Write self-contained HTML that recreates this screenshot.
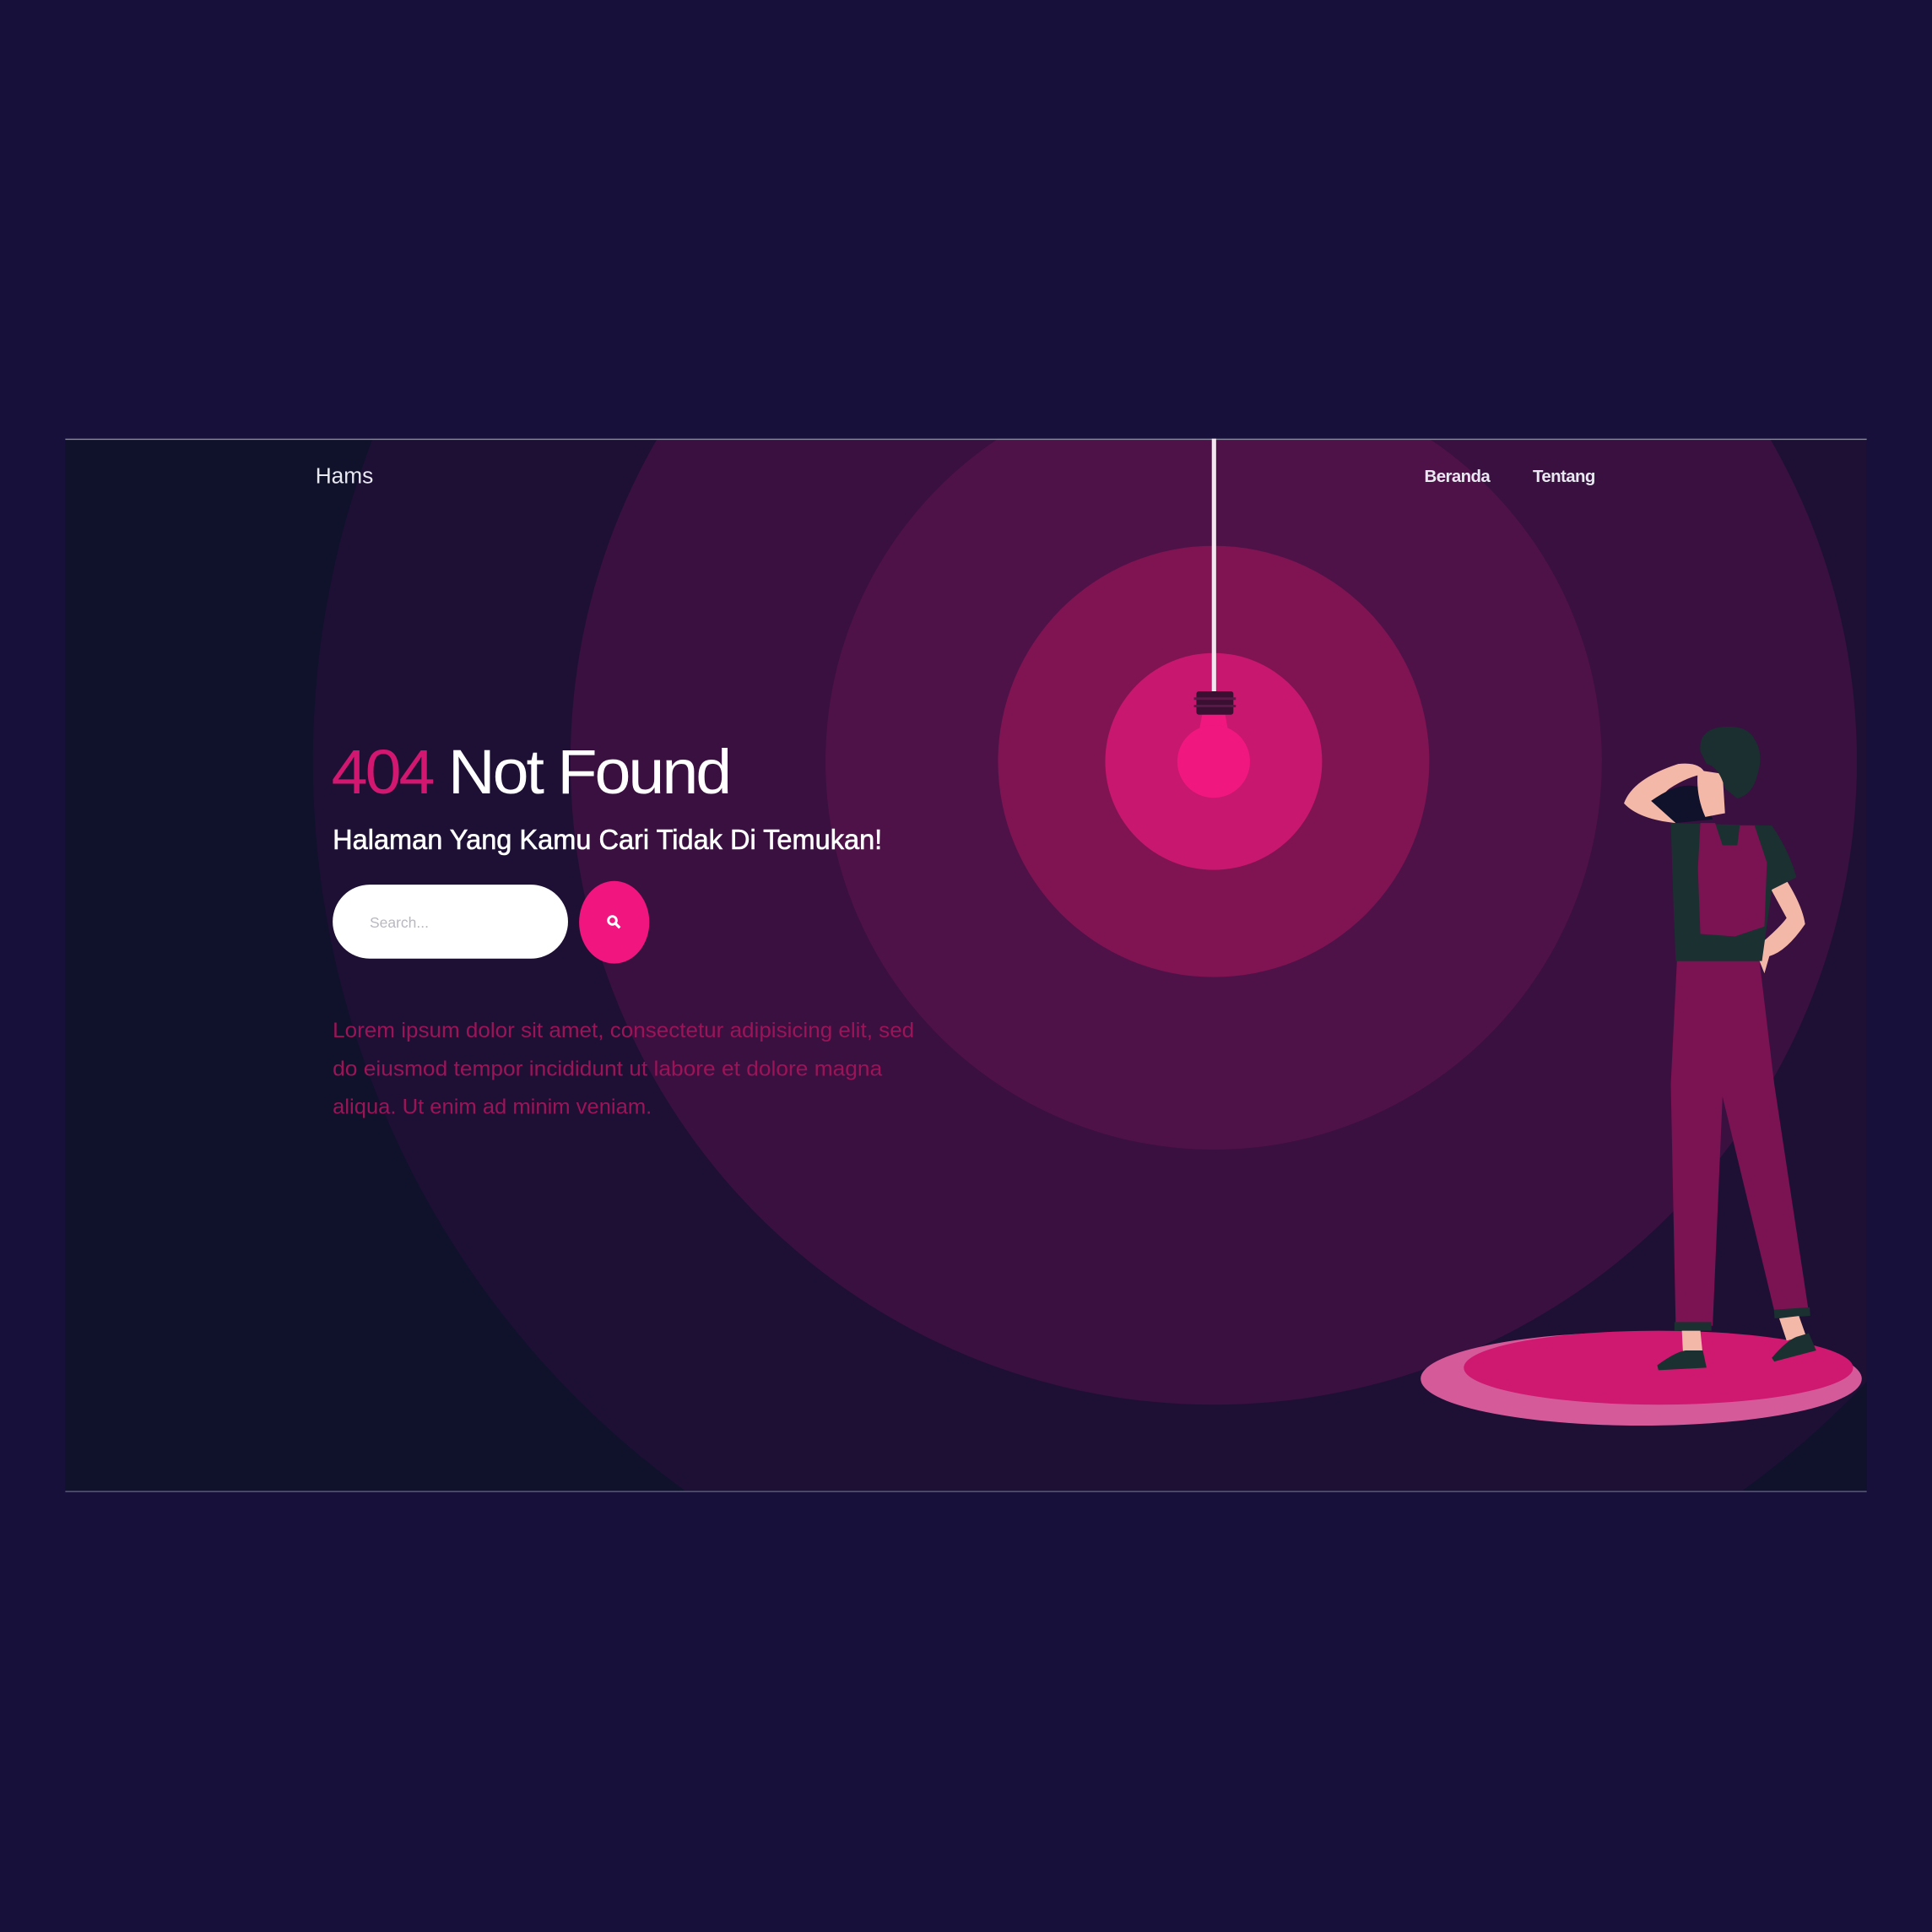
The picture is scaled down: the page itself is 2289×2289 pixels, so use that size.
<!DOCTYPE html>
<html><head><meta charset="utf-8"><style>
html,body{margin:0;padding:0;background:#16103a;}
body{width:2289px;height:2289px;overflow:hidden;}
svg{display:block;}
</style></head><body>
<svg width="2289" height="2289" viewBox="0 0 1568 1568" xmlns="http://www.w3.org/2000/svg">
<defs><clipPath id="fr"><rect x="53" y="356" width="1462" height="854"/></clipPath></defs>
<rect width="1568" height="1568" fill="#16103a"/>
<g clip-path="url(#fr)">
<rect x="53" y="356" width="1462" height="854" fill="#10122b"/>
<circle cx="985" cy="618" r="731" fill="#1e1035"/>
<circle cx="985" cy="618" r="522" fill="#3a1040"/>
<circle cx="985" cy="618" r="315" fill="#4f1248"/>
<circle cx="985" cy="618" r="175" fill="#801452"/>
<circle cx="985" cy="618" r="88" fill="#c8176e"/>
</g>
<line x1="53" y1="356.5" x2="1515" y2="356.5" stroke="#8a8aa0" stroke-width="1"/>
<line x1="53" y1="1210.5" x2="1515" y2="1210.5" stroke="#5a5a78" stroke-width="1"/>
<rect x="983.5" y="356" width="3.5" height="206" fill="#f4e6f0"/>
<path d="M976 578 L994 578 L998 600 L972 600 Z" fill="#f0177f"/>
<circle cx="985" cy="618" r="29.5" fill="#f0177f"/>
<rect x="971" y="561" width="30" height="19" rx="2" fill="#3a0f32"/>
<rect x="969" y="566" width="34" height="2" fill="#5a1a48"/>
<rect x="969" y="572" width="34" height="2" fill="#5a1a48"/>
<ellipse cx="1332" cy="1119" rx="179" ry="38" fill="#d55a9a"/>
<ellipse cx="1346" cy="1110" rx="158" ry="30" fill="#cf1870"/>
<g>
<path d="M1361 780 L1428 780 L1440 880 L1468 1065 L1441 1068 L1398 890 L1390 1076 L1360 1076 L1356 880 Z" fill="#7b1252"/>
<rect x="1359" y="1073" width="30" height="7" fill="#1b3030"/>
<rect x="1440" y="1062" width="29" height="7" fill="#1b3030" transform="rotate(-4 1454 1066)"/>
<path d="M1365 1080 L1380 1080 L1382 1100 L1366 1100 Z" fill="#f4b8a8"/>
<path d="M1444 1070 L1460 1068 L1466 1085 L1450 1088 Z" fill="#f4b8a8"/>
<path d="M1345 1108 Q1360 1097 1368 1096 L1382 1096 L1385 1110 L1346 1112 Z" fill="#1b3030"/>
<path d="M1438 1102 Q1450 1088 1458 1085 L1468 1082 L1474 1096 L1440 1105 Z" fill="#1b3030"/>
<path d="M1440 700 Q1462 730 1465 750 Q1450 772 1436 776 L1432 790 L1428 780 L1430 765 Q1445 752 1450 745 L1432 712 Z" fill="#f4b8a8"/>
<path d="M1356 668 L1438 670 Q1452 690 1458 712 L1438 722 L1430 780 L1360 780 L1358 730 Z" fill="#1b3030"/>
<path d="M1380 668 L1392 668 L1398 686 L1410 686 L1412 670 L1424 670 L1434 700 L1432 752 L1408 760 L1380 758 L1378 705 Z" fill="#7b1252"/>
<path d="M1360 668 Q1330 665 1318 652 Q1325 632 1362 620 Q1380 618 1384 628 Q1370 630 1355 640 Q1344 648 1360 655 Z" fill="#f4b8a8"/>
<path d="M1340 650 Q1365 632 1382 640 L1390 665 L1360 668 Z" fill="#10112a"/>
<path d="M1378 625 L1398 628 L1400 660 L1384 663 Q1376 645 1378 625 Z" fill="#f4b8a8"/>
<path d="M1380 610 Q1378 592 1398 590 Q1418 588 1424 600 Q1432 612 1426 630 Q1422 645 1410 648 L1400 640 Q1395 622 1385 620 Z" fill="#1b2e30"/>
</g>
<text x="256" y="392" font-family="Liberation Sans, sans-serif" font-size="18" fill="#e8e8f0">Hams</text>
<text x="1156" y="391" font-family="Liberation Sans, sans-serif" font-size="14" font-weight="bold" fill="#e8e8f0" letter-spacing="-0.4">Beranda</text>
<text x="1244" y="391" font-family="Liberation Sans, sans-serif" font-size="14" font-weight="bold" fill="#e8e8f0" letter-spacing="-0.4">Tentang</text>
<text x="269" y="644" font-family="Liberation Sans, sans-serif" font-size="51" fill="#fff" letter-spacing="-2" textLength="323" lengthAdjust="spacingAndGlyphs"><tspan fill="#d1176f">404</tspan> Not Found</text>
<text x="270" y="689" font-family="Liberation Sans, sans-serif" font-size="23" fill="#fff" stroke="#fff" stroke-width="0.4" textLength="446" lengthAdjust="spacingAndGlyphs">Halaman Yang Kamu Cari Tidak Di Temukan!</text>
<rect x="270" y="718" width="191" height="60" rx="30" fill="#fff"/>
<text x="300" y="753" font-family="Liberation Sans, sans-serif" font-size="12" fill="#b8b8c0">Search...</text>
<ellipse cx="498.5" cy="748.5" rx="28.5" ry="33.5" fill="#f0157f"/>
<circle cx="497" cy="747" r="3.3" fill="none" stroke="#fff" stroke-width="2"/>
<line x1="499.5" y1="749.5" x2="503" y2="753" stroke="#fff" stroke-width="2.2"/>
<g font-family="Liberation Sans, sans-serif" font-size="17" fill="#9c1458">
<text x="270" y="842" textLength="472" lengthAdjust="spacingAndGlyphs">Lorem ipsum dolor sit amet, consectetur adipisicing elit, sed</text>
<text x="270" y="873" textLength="446" lengthAdjust="spacingAndGlyphs">do eiusmod tempor incididunt ut labore et dolore magna</text>
<text x="270" y="904" textLength="259" lengthAdjust="spacingAndGlyphs">aliqua. Ut enim ad minim veniam.</text>
</g>
</svg>
</body></html>
